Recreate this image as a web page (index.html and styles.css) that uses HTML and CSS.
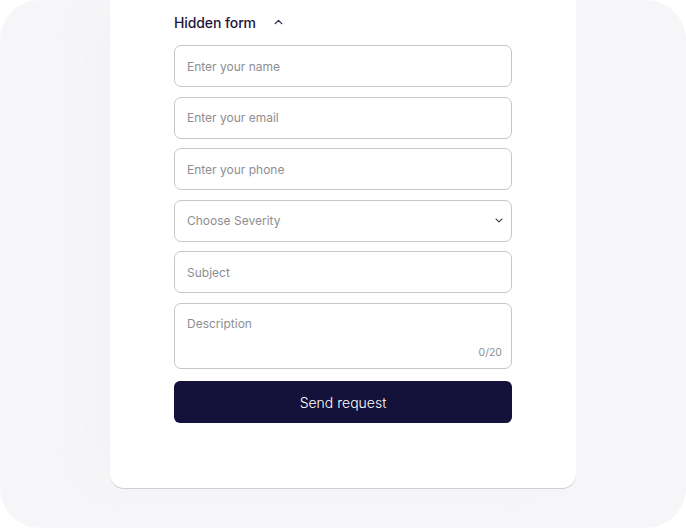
FILE: index.html
```html
<!DOCTYPE html>
<html lang="en">
<head>
<meta charset="UTF-8">
<title>Hidden form</title>
<link rel="stylesheet" href="styles.css">
</head>
<body>
<div class="panel">
  <div class="card">
    <div class="toggle">
      <span class="toggle-title">Hidden form</span>
      <svg class="chev-up" width="9" height="6" viewBox="0 0 9 6"><path d="M1.2 4.6L4.5 1.4L7.8 4.6" fill="none" stroke="#2a2744" stroke-width="1.3" stroke-linecap="round" stroke-linejoin="round"/></svg>
    </div>
    <form class="form">
      <input class="field" type="text" placeholder="Enter your name">
      <input class="field" type="email" placeholder="Enter your email">
      <input class="field" type="tel" placeholder="Enter your phone">
      <div class="field select">
        <span>Choose Severity</span>
        <svg width="8" height="5" viewBox="0 0 8 5"><path d="M1 1L4 3.8L7 1" fill="none" stroke="#444" stroke-width="1.1" stroke-linecap="round" stroke-linejoin="round"/></svg>
      </div>
      <input class="field" type="text" placeholder="Subject">
      <div class="field area">
        <textarea placeholder="Description"></textarea>
        <span class="count">0/20</span>
      </div>
      <button type="button" class="send">Send request</button>
    </form>
  </div>
</div>
</body>
</html>
```
FILE: styles.css
```css
*{box-sizing:border-box;}
html,body{margin:0;background:#fff;}
body{font-family:'Inter','Noto Sans',sans-serif;}

.panel{
  width:686px;height:528px;
  border-radius:40px;
  background:#f6f6f8;
  overflow:hidden;
  display:flex;
  justify-content:center;
  align-items:flex-start;
}
.card{
  width:466px;
  background:#fff;
  border-radius:0 0 14px 14px;
  box-shadow:0 1px 0 #cfcfd4, -30px 0 40px -20px rgba(240,240,245,.6);
  padding:12px 64px 65px;
}

/* header */
.toggle{display:flex;align-items:center;gap:18px;height:20px;margin-bottom:13px;}
.toggle-title{font-size:14px;font-weight:500;color:#1a1640;letter-spacing:-.1px;}
.chev-up{margin-top:-1px;}

/* fields */
.form{display:flex;flex-direction:column;gap:9.5px;}
.field{
  width:100%;height:42px;
  border:1px solid #c6c6c8;border-radius:7px;
  background:#fff;
  padding:0 12px;
  font-family:inherit;font-size:12px;color:#333;
  outline:none;
}
.field::placeholder{color:#8e8e91;}
.select{display:flex;align-items:center;justify-content:space-between;color:#8e8e91;padding-right:8px;}
.area{height:66px;position:relative;padding:12px 12px 0;}
.area textarea{
  border:none;outline:none;resize:none;width:100%;height:22px;padding:0;
  font-family:inherit;font-size:12px;color:#333;
}
.area textarea::placeholder{color:#8e8e91;}
.count{position:absolute;right:9px;bottom:9px;font-size:10.5px;color:#8e8e91;}

.send{
  margin-top:3px;
  height:42px;width:100%;
  border:none;border-radius:6px;
  background:#14113a;color:#fff;
  font-family:inherit;font-size:14px;font-weight:300;
}
```
